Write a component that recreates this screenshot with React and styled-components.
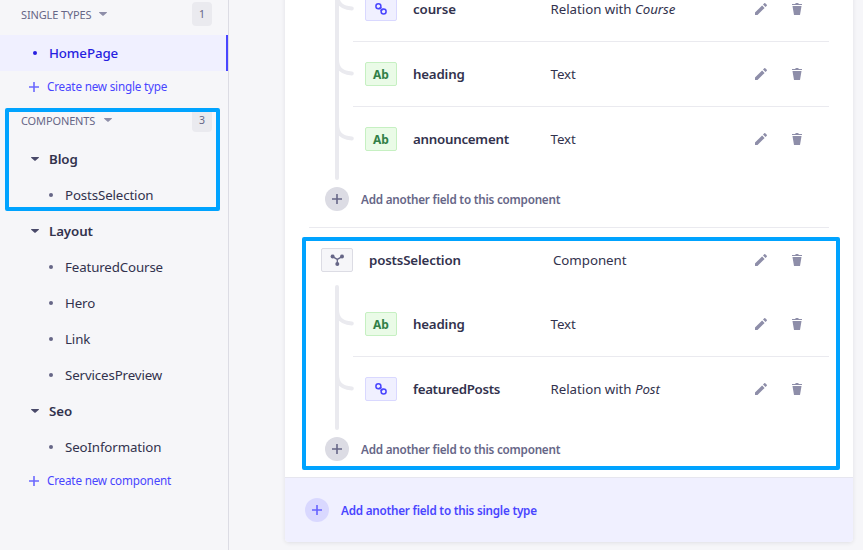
import React from "react";
import styled, { createGlobalStyle } from "styled-components";

const Global = createGlobalStyle`
  * { box-sizing: border-box; }
  body { margin: 0; background: #f6f6f9; font-family: "Noto Sans", "Open Sans", sans-serif; color: #32324d; overflow: hidden; }
`;

const Page = styled.div`
  position: relative;
  display: flex;
  width: 863px;
  height: 550px;
  overflow: hidden;
  background: #f6f6f9;
`;
const Sidebar = styled.nav`
  width: 229px;
  flex: none;
  border-right: 1px solid #dcdce4;
  padding-top: 2px;
`;
const SectionHead = styled.div`
  display: flex;
  align-items: center;
  height: 24px;
  padding: 0 16px 0 21px;
  margin-bottom: 9px;
  color: #666687;
`;
const SectionTitle = styled.span`
  font-size: 11px;
  line-height: 16px;
  letter-spacing: -0.13px;
  margin-top: 2px;
`;
const Count = styled.span`
  margin-left: auto;
  width: 20px;
  height: 24px;
  border-radius: 4px;
  background: #eaeaef;
  font-size: 10.5px;
  line-height: 24px;
  text-align: center;
`;
const CaretSvg = styled.svg`
  flex: none;
  width: 8px;
  height: 4px;
  margin-left: ${(p) => p.$ml || 0}px;
  fill: ${(p) => p.$color};
`;
const Row = styled.div`
  display: flex;
  align-items: center;
  height: 36px;
  padding-left: ${(p) => p.$pad}px;
  background: ${(p) => (p.$active ? "#f0f0ff" : "transparent")};
  border-right: ${(p) => (p.$active ? "2px solid #4945ff" : "0")};
  color: ${(p) => (p.$active ? "#271fe0" : "#32324d")};
`;
const GroupRow = styled(Row)`
  gap: 10px;
`;
const Dot = styled.i`
  width: 4px;
  height: 4px;
  border-radius: 50%;
  margin-right: 12px;
  background: ${(p) => (p.$active ? "#271fe0" : "#666687")};
`;
const Text = styled.span`
  font-size: 13.3px;
  font-weight: ${(p) => p.$weight || 400};
  letter-spacing: ${(p) => p.$ls || 0}px;
  white-space: nowrap;
  line-height: 20px;
`;
const CreateText = styled(Text)`
  font-size: 11.7px;
  letter-spacing: -0.19px;
  padding-bottom: 2px;
`;
const AddText = styled(Text)`
  font-size: 11.7px;
  letter-spacing: -0.22px;
`;
const CreateLink = styled.div`
  display: flex;
  align-items: center;
  gap: 8px;
  height: 32px;
  padding-left: 29px;
  margin-bottom: ${(p) => p.$mb || 0}px;
  color: #4945ff;
`;
const PlusSvg = styled.svg`
  width: 10px;
  height: 10px;
  fill: currentColor;
  opacity: ${(p) => p.$opacity || 1};
`;

const Card = styled.main`
  width: 568px;
  height: 565px;
  margin: -23px 0 0 56px;
  background: #fff;
  border-radius: 4px;
  box-shadow: 0 1px 4px rgba(33, 33, 52, 0.1);
`;
const Body = styled.div`
  padding: 0 24px;
`;
const Nested = styled.div`
  position: relative;
  padding-left: 44px;
  &::before {
    content: "";
    position: absolute;
    left: 26px;
    top: ${(p) => p.$top}px;
    bottom: -9px;
    width: 4px;
    border-radius: 2px;
    background: #eaeaef;
  }
`;
const Field = styled.div`
  position: relative;
  display: grid;
  grid-template-columns: ${(p) => p.$cols} 1fr auto;
  align-items: center;
  height: ${(p) => (p.$last ? 64 : 65)}px;
  padding: 0 26px 0 12px;
  border-bottom: ${(p) => (p.$last ? "0" : "1px solid #eaeaef")};
`;
const Curve = styled.svg`
  position: absolute;
  left: -16px;
  top: 14px;
  width: 18px;
  height: 20px;
`;
const palette = {
  text: ["#eafbe7", "#c6f0c2", "#328048"],
  relation: ["#f0f0ff", "#d9d8ff", "#4945ff"],
  component: ["#f6f6f9", "#dcdce4", "#666687"],
};
const Badge = styled.span`
  display: flex;
  align-items: center;
  justify-content: center;
  width: 32px;
  height: 24px;
  border-radius: 2px;
  background: ${(p) => palette[p.$kind][0]};
  border: 1px solid ${(p) => palette[p.$kind][1]};
  color: ${(p) => palette[p.$kind][2]};
  font-size: 12px;
  font-weight: 700;
`;
const Actions = styled.div`
  display: flex;
  gap: 24px;
`;
const ActionSvg = styled.svg`
  width: 12px;
  height: 12px;
  fill: #8e8ea9;
`;
const AddRow = styled.div`
  display: flex;
  align-items: center;
  gap: 12px;
  height: 56px;
  padding-left: 16px;
  color: #666687;
`;
const Divider = styled.hr`
  margin: 0;
  border: 0;
  height: 1px;
  background: #eaeaef;
`;
const Circle = styled.span`
  display: flex;
  align-items: center;
  justify-content: center;
  width: 24px;
  height: 24px;
  border-radius: 50%;
  background: ${(p) => (p.$blue ? "#d9d8ff" : "#dcdce4")};
`;
const Footer = styled.div`
  display: flex;
  align-items: center;
  gap: 12px;
  height: 65px;
  padding-left: 20px;
  border-top: 1px solid #e6e6ef;
  border-radius: 0 0 4px 4px;
  background: #f0f0ff;
  color: #4945ff;
`;
const Highlight = styled.div`
  position: absolute;
  left: ${(p) => p.$x}px;
  top: ${(p) => p.$y}px;
  width: ${(p) => p.$w}px;
  height: ${(p) => p.$h}px;
  border: 4px solid #00a3ff;
  border-radius: 2px;
  pointer-events: none;
`;

const Caret = ({ ml, color = "#4a4a6a" }) => (
  <CaretSvg viewBox="0 0 14 8" preserveAspectRatio="none" $ml={ml} $color={color}>
    <path d="M14 .889a.86.86 0 01-.26.625L7.615 7.736A.834.834 0 017 8a.834.834 0 01-.615-.264L.26 1.514A.861.861 0 010 .889c0-.24.087-.45.26-.625A.834.834 0 01.875 0h12.25c.237 0 .442.088.615.264a.86.86 0 01.26.625z" />
  </CaretSvg>
);
const Plus = ({ opacity }) => (
  <PlusSvg viewBox="0 0 24 24" $opacity={opacity}>
    <path d="M24 13.604a.3.3 0 01-.3.3h-9.795V23.7a.3.3 0 01-.3.3h-3.21a.3.3 0 01-.3-.3v-9.795H.3a.3.3 0 01-.3-.3v-3.21a.3.3 0 01.3-.3h9.795V.3a.3.3 0 01.3-.3h3.21a.3.3 0 01.3.3v9.795H23.7a.3.3 0 01.3.3v3.21z" />
  </PlusSvg>
);
const Pencil = () => (
  <ActionSvg viewBox="0 0 24 24">
    <path d="M23.604 3.514c.528.528.528 1.36 0 1.887l-2.622 2.607-4.99-4.99L18.6.396a1.322 1.322 0 011.887 0l3.118 3.118zM0 24v-4.99l14.2-14.2 4.99 4.99L4.99 24H0z" />
  </ActionSvg>
);
const Trash = () => (
  <ActionSvg viewBox="0 0 24 24">
    <path d="M3.236 6.149a.2.2 0 00-.197.233L6 24h12l2.96-17.618a.2.2 0 00-.196-.233H3.236zM21.8 1.983c.11 0 .2.09.2.2v1.584a.2.2 0 01-.2.2H2.2a.2.2 0 01-.2-.2V2.183c0-.11.09-.2.2-.2h5.511c.9 0 1.631-1.09 1.631-1.983h5.316c0 .894.73 1.983 1.631 1.983H21.8z" />
  </ActionSvg>
);
const LinkIcon = () => (
  <svg width="12" height="12" viewBox="0 0 12 12" fill="none" stroke="currentColor" strokeWidth="1.5">
    <circle cx="3.4" cy="3.3" r="2.5" />
    <circle cx="8.6" cy="8.6" r="2.5" />
    <path d="M3.6 5.7L6.6 4.6M5.4 7.4L8.4 6.2" />
  </svg>
);
const ComponentIcon = () => (
  <svg width="14" height="12" viewBox="0 0 14 12" fill="currentColor" stroke="currentColor">
    <circle cx="2.6" cy="2.6" r="2" stroke="none" />
    <circle cx="12" cy="2.6" r="2" stroke="none" />
    <circle cx="7.3" cy="9.9" r="2" stroke="none" />
    <path d="M2.6 2.6L7.3 5.4L12 2.6M7.3 5.4V10" fill="none" strokeWidth="1.3" />
  </svg>
);
const icons = { text: "Ab", relation: <LinkIcon />, component: <ComponentIcon /> };

const FieldRow = ({ kind, name, nameLs, type, em, last, cols = "48px 137.5px", curve = true }) => (
  <Field $last={last} $cols={cols}>
    {curve && (
      <Curve viewBox="0 0 18 20" fill="none" stroke="#eaeaef" strokeWidth="4" strokeLinecap="round">
        <path d="M0 1V3C0 13 5 17 14.8 17.5" />
      </Curve>
    )}
    <Badge $kind={kind}>{icons[kind]}</Badge>
    <Text $weight={600} $ls={nameLs}>{name}</Text>
    <Text $ls={-0.04}>{type}{em && <em>{em}</em>}</Text>
    <Actions>
      <Pencil />
      <Trash />
    </Actions>
  </Field>
);

const AddField = () => (
  <AddRow>
    <Circle><Plus /></Circle>
    <AddText $weight={600}>Add another field to this component</AddText>
  </AddRow>
);

const groups = [
  ["Blog", ["PostsSelection"]],
  ["Layout", ["FeaturedCourse", "Hero", "Link", "ServicesPreview"]],
  ["Seo", ["SeoInformation"]],
];

export default function App() {
  return (
    <Page>
      <Global />
      <Sidebar>
        <SectionHead>
          <SectionTitle>SINGLE TYPES</SectionTitle>
          <Caret ml={8} color="#8e8ea9" />
          <Count>1</Count>
        </SectionHead>
        <Row $active $pad={33}>
          <Dot $active />
          <Text $weight={500} $ls={-0.1}>HomePage</Text>
        </Row>
        <CreateLink $mb={5}>
          <Plus opacity={0.8} />
          <CreateText>Create new single type</CreateText>
        </CreateLink>
        <SectionHead>
          <SectionTitle>COMPONENTS</SectionTitle>
          <Caret ml={9} color="#8e8ea9" />
          <Count>3</Count>
        </SectionHead>
        {groups.map(([title, items]) => (
          <React.Fragment key={title}>
            <GroupRow $pad={31}>
              <Caret />
              <Text $weight={600} $ls={-0.1}>{title}</Text>
            </GroupRow>
            {items.map((label) => (
              <Row key={label} $pad={49}>
                <Dot />
                <Text $ls={-0.13}>{label}</Text>
              </Row>
            ))}
          </React.Fragment>
        ))}
        <CreateLink>
          <Plus opacity={0.8} />
          <CreateText>Create new component</CreateText>
        </CreateLink>
      </Sidebar>
      <Card>
        <Body>
          <Nested $top={0}>
            <FieldRow kind="relation" name="course" nameLs={-0.1} type="Relation with " em="Course" />
            <FieldRow kind="text" name="heading" nameLs={-0.2} type="Text" />
            <FieldRow kind="text" name="announcement" nameLs={-0.25} type="Text" last />
          </Nested>
          <AddField />
          <Divider />
          <FieldRow kind="component" name="postsSelection" nameLs={-0.17} type="Component" last cols="48px 184px" curve={false} />
          <Nested $top={-7}>
            <FieldRow kind="text" name="heading" nameLs={-0.2} type="Text" />
            <FieldRow kind="relation" name="featuredPosts" nameLs={-0.29} type="Relation with " em="Post" last />
          </Nested>
          <AddField />
        </Body>
        <Footer>
          <Circle $blue><Plus opacity={0.8} /></Circle>
          <AddText $weight={600}>Add another field to this single type</AddText>
        </Footer>
      </Card>
      <Highlight $x={5} $y={108} $w={215} $h={103} />
      <Highlight $x={302} $y={237} $w={538} $h={233} />
    </Page>
  );
}
